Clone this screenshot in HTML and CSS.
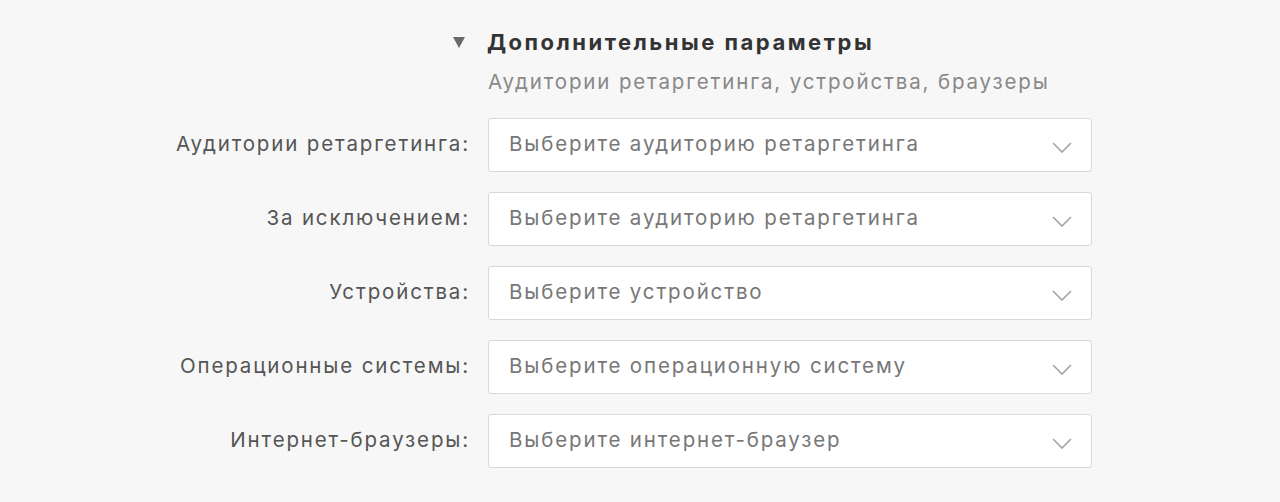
FILE: index.html
```html
<!DOCTYPE html>
<html lang="ru">
<head>
<meta charset="utf-8">
<link rel="stylesheet" href="styles.css">
</head>
<body>
<div class="form">
  <div class="toggle-cell"><span class="toggle"></span></div>
  <div class="head">
    <div class="title">Дополнительные параметры</div>
    <div class="subtitle">Аудитории ретаргетинга, устройства, браузеры</div>
  </div>

  <label class="label">Аудитории ретаргетинга:</label>
  <div class="select"><span class="ph">Выберите аудиторию ретаргетинга</span><svg class="chev" viewBox="0 0 20 11"><path d="M1 1 L10 10 L19 1"/></svg></div>

  <label class="label">За исключением:</label>
  <div class="select"><span class="ph">Выберите аудиторию ретаргетинга</span><svg class="chev" viewBox="0 0 20 11"><path d="M1 1 L10 10 L19 1"/></svg></div>

  <label class="label">Устройства:</label>
  <div class="select"><span class="ph">Выберите устройство</span><svg class="chev" viewBox="0 0 20 11"><path d="M1 1 L10 10 L19 1"/></svg></div>

  <label class="label">Операционные системы:</label>
  <div class="select"><span class="ph">Выберите операционную систему</span><svg class="chev" viewBox="0 0 20 11"><path d="M1 1 L10 10 L19 1"/></svg></div>

  <label class="label">Интернет-браузеры:</label>
  <div class="select"><span class="ph">Выберите интернет-браузер</span><svg class="chev" viewBox="0 0 20 11"><path d="M1 1 L10 10 L19 1"/></svg></div>
</div>
</body>
</html>
```
FILE: styles.css
```css
html, body {
  margin: 0;
  background: #f7f7f7;
  font-family: Inter, "Open Sans", "Noto Sans", sans-serif;
  -webkit-font-smoothing: antialiased;
}
.form {
  display: grid;
  grid-template-columns: 468px 604px;
  column-gap: 20px;
  row-gap: 20px;
  padding-top: 27px;
  align-items: center;
}
.toggle-cell {
  align-self: start;
  display: flex;
  justify-content: flex-end;
  padding-top: 10px;
  padding-right: 3px;
}
.toggle {
  width: 0;
  height: 0;
  border-left: 6px solid transparent;
  border-right: 6px solid transparent;
  border-top: 11px solid #6b6b6b;
}
.head {
  padding-bottom: 4px;
  margin-left: -1px;
}
.title {
  font-size: 22px;
  font-weight: 700;
  letter-spacing: 2.5px;
  color: #333;
  line-height: 30px;
}
.subtitle {
  font-size: 20.5px;
  letter-spacing: 1.85px;
  color: #888;
  line-height: 24px;
  margin-top: 13px;
  padding-left: 1px;
}
.label {
  font-size: 20.5px;
  letter-spacing: 1.85px;
  color: #555;
  text-align: right;
  line-height: 24px;
  margin-top: -3px;
  margin-right: -2px;
}
.select {
  height: 54px;
  box-sizing: border-box;
  border: 1px solid #d9d9d9;
  border-radius: 3px;
  background: #fff;
  display: flex;
  align-items: center;
  justify-content: space-between;
  padding: 0 19px 0 20px;
}
.ph {
  font-size: 20.5px;
  letter-spacing: 1.85px;
  color: #777;
  line-height: 24px;
  margin-top: -2px;
}
.chev {
  width: 20px;
  height: 11px;
  fill: none;
  stroke: #a3a3a3;
  stroke-width: 1.6;
  margin-top: 4px;
}
```
